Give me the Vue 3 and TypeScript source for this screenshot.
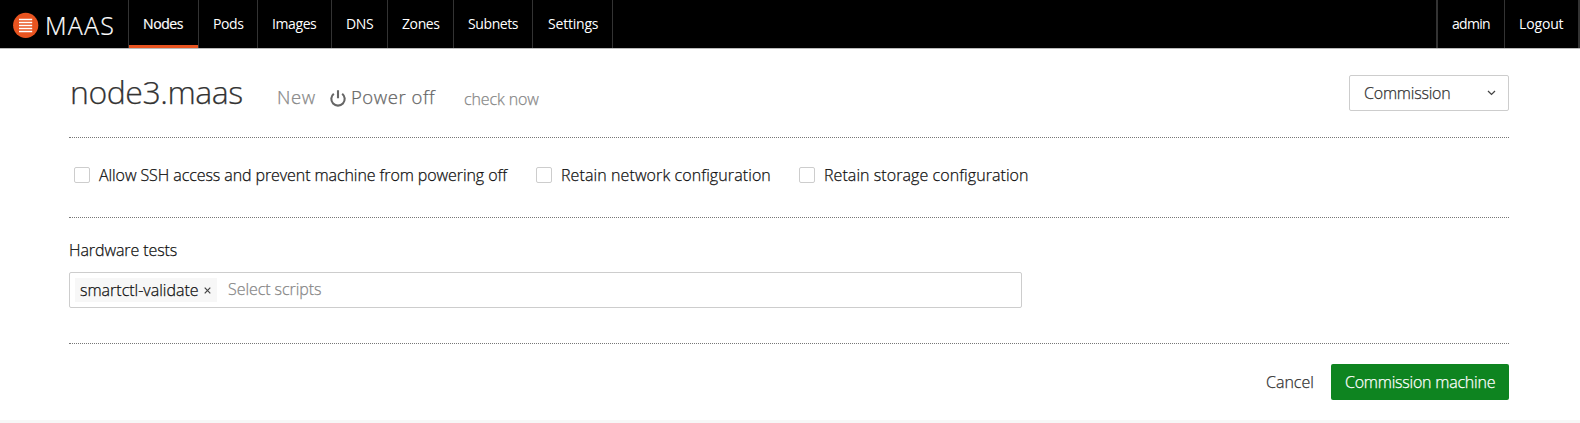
<script setup lang="ts">
import { ref } from 'vue'

interface NavItem { label: string; width: number; active?: boolean }

const navItems: NavItem[] = [
  { label: 'Nodes', width: 70, active: true },
  { label: 'Pods', width: 59 },
  { label: 'Images', width: 74 },
  { label: 'DNS', width: 56 },
  { label: 'Zones', width: 66 },
  { label: 'Subnets', width: 79 },
  { label: 'Settings', width: 80 },
]

const options = ref([
  { id: 'ssh', label: 'Allow SSH access and prevent machine from powering off', checked: false },
  { id: 'network', label: 'Retain network configuration', checked: false },
  { id: 'storage', label: 'Retain storage configuration', checked: false },
])
</script>

<template>
  <div class="page">
    <header class="topbar">
      <a class="logo">
        <svg width="26" height="26" viewBox="0 0 26 26">
          <circle cx="12.7" cy="13.3" r="12.6" fill="#e95420" />
          <path d="M6 7.5h13.2M6 10.5h13.2M6 13.5h13.2M6 16.5h13.2M6 19.5h13.2" stroke="#fff" stroke-width="1.4" />
        </svg>
        <span class="brand">MAAS</span>
      </a>
      <nav class="links">
        <a v-for="item in navItems" :key="item.label" class="link" :class="{ active: item.active }" :style="{ width: item.width + 'px' }"><span>{{ item.label }}</span></a>
      </nav>
      <nav class="account">
        <a class="admin"><span>admin</span></a>
        <a class="logout"><span>Logout</span></a>
      </nav>
    </header>

    <main class="content">
      <section class="heading">
        <h1>node3.maas</h1>
        <span class="status">New</span>
        <svg class="power-icon" width="16" height="17" viewBox="0 0 16 17" fill="none" stroke="#666" stroke-width="2.1">
          <path d="M3.8 3.7a6.7 6.7 0 1 0 8.4 0M8 .3v8" />
        </svg>
        <span class="power">Power off</span>
        <a class="check">check now</a>
        <button class="select">
          <span>Commission</span>
          <svg width="9" height="6" viewBox="0 0 9 6" fill="none" stroke="#444" stroke-width="1.3"><path d="M1 1l3.5 3.4L8 1" /></svg>
        </button>
      </section>

      <section class="options">
        <label v-for="o in options" :key="o.id" :class="['option', o.id]">
          <input v-model="o.checked" type="checkbox"><span>{{ o.label }}</span>
        </label>
      </section>

      <section class="tests">
        <div class="tests-label"><span>Hardware tests</span></div>
        <div class="tags">
          <div class="tag">
            <span class="tag-name">smartctl-validate</span>
            <svg width="7" height="7" viewBox="0 0 7 7" stroke="#444" stroke-width="1.2"><path d="M.7 .7l5.6 5.6M6.3 .7L.7 6.3" /></svg>
          </div>
          <span class="placeholder">Select scripts</span>
        </div>
      </section>

      <footer class="actions">
        <a class="cancel"><span>Cancel</span></a>
        <button class="submit"><span>Commission machine</span></button>
      </footer>
    </main>
  </div>
</template>

<style>
body { margin: 0; overflow: hidden; background: #f7f7f7; }
</style>

<style scoped>
* { box-sizing: border-box; }
.page {
  height: 420px;
  background: #fff;
  box-shadow: 0 1px 0 #dedede, 0 2px 0 #efefef;
  font: 300 16px/24px "Open Sans", "Noto Sans", sans-serif;
  color: #111;
  white-space: nowrap;
  -webkit-text-stroke: .25px currentColor;
}
.topbar {
  display: flex;
  height: 49px;
  background: #000;
  border-bottom: 1px solid #bbb;
  color: #fff;
  font-size: 14px;
  font-weight: 400;
  -webkit-text-stroke: 0;
}
.logo { display: flex; width: 129px; padding: 12px 0 0 13px; border-right: 1px solid #333; }
.brand { margin: 0 0 0 6px; font-size: 25px; font-weight: 300; line-height: 26px; letter-spacing: 1.2px; -webkit-text-stroke: .2px #fff; }
.links, .account { display: flex; }
.link { padding: 12px 0 0 14px; border-right: 1px solid #333; letter-spacing: -.4px; }
.link:last-child { padding-left: 15px; letter-spacing: -.2px; }
.active { box-shadow: inset 0 -3px #e95420; -webkit-text-stroke: .2px #fff; }
.account { margin-left: auto; letter-spacing: -.3px; }
.admin { width: 69px; padding: 12px 0 0 14px; border-left: 2px solid #333; border-right: 1px solid #333; letter-spacing: -.7px; }
.logout { width: 75px; padding: 12px 0 0 14px; border-right: 2px solid #333; letter-spacing: -.15px; }
.content { width: 1440px; margin-left: 69px; }
.heading { display: flex; height: 89px; border-bottom: 1px dotted #777; }
h1 { width: 207px; margin: 23px 0 0; padding-left: 1px; font-size: 32px; line-height: 40px; font-weight: 300; letter-spacing: -.45px; color: #333; }
.status, .power { margin-top: 36px; font-size: 18.5px; color: #888; letter-spacing: .6px; }
.status { width: 54px; padding-left: 1px; }
.power-icon { margin-top: 41px; }
.power { width: 118px; padding-left: 5px; color: #666; letter-spacing: .55px; }
.check { margin-top: 38px; color: #888; letter-spacing: -.1px; }
.select {
  display: flex;
  align-items: center;
  justify-content: space-between;
  width: 160px;
  height: 36px;
  margin: 26px 0 0 auto;
  padding: 0 12px 0 14px;
  border: 1px solid #cdcdcd;
  border-radius: 2px;
  background: #fff;
  color: #333;
  font: inherit;
  letter-spacing: -.2px;
}
.options { display: flex; height: 80px; padding: 29px 0 0 5px; border-bottom: 1px dotted #777; }
.option { display: flex; height: 24px; letter-spacing: .07px; }
.option input { appearance: none; width: 16px; height: 16px; margin: 0 9px 0 0; border: 1px solid #cdcdcd; border-radius: 2px; background: #fff; }
.option span { margin-top: -4px; }
.ssh { width: 462px; letter-spacing: -.08px; }
.network { width: 263px; letter-spacing: .1px; }
.tests { height: 126px; padding-top: 20px; border-bottom: 1px dotted #777; }
.tests-label { height: 34px; letter-spacing: -.08px; }
.tags { display: flex; width: 953px; height: 36px; padding: 5px; border: 1px solid #cdcdcd; border-radius: 2px; }
.tag { display: flex; align-items: center; justify-content: space-between; width: 142px; height: 24px; padding: 0 6px 0 5px; background: #f7f7f7; }
.placeholder { margin: -1px 0 0 11px; color: #888; letter-spacing: -.06px; }
.actions { display: flex; justify-content: flex-end; padding-top: 20px; }
.cancel { width: 65px; padding-top: 6px; color: #333; }
.submit { width: 178px; height: 36px; padding: 0 0 0 14px; border: 0; border-radius: 2px; background: #0e8420; color: #fff; font: inherit; text-align: left; letter-spacing: -.22px; }
</style>
